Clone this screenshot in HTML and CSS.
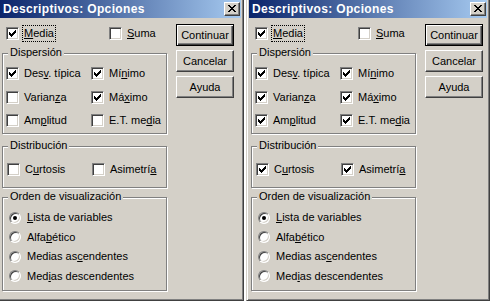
FILE: index.html
```html
<!DOCTYPE html>
<html lang="es">
<head>
    <meta charset="UTF-8">
    <title>Descriptivos: Opciones</title>
    <link rel="stylesheet" href="styles.css">
</head>
<body>
    <svg class="defs" width="0" height="0">
        <defs>
            <path id="tick" d="M6 0h1v1h-1z M5 1h2v1h-2z M0 2h1v1h-1z M4 2h3v1h-3z M0 3h2v1h-2z M3 3h3v1h-3z M0 4h5v1h-5z M1 5h3v1h-3z M2 6h1v1h-1z"/>
            <path id="cross" d="M0 0h2v1h-2z M6 0h2v1h-2z M1 1h2v1h-2z M5 1h2v1h-2z M2 2h4v1h-4z M3 3h2v1h-2z M2 4h4v1h-4z M1 5h2v1h-2z M5 5h2v1h-2z M0 6h2v1h-2z M6 6h2v1h-2z"/>
        </defs>
    </svg>

    <div class="screens">
        <!-- first state: default options -->
        <div class="window">
            <div class="titlebar">
                <span class="title">Descriptivos: Opciones</span>
                <span class="close"><svg width="8" height="7"><use href="#cross"/></svg></span>
            </div>
            <div class="client">
                <div class="options">
                    <div class="toprow">
                        <label class="check focus"><span class="cb"><svg width="7" height="7"><use href="#tick"/></svg></span><span class="text"><u>M</u>edia</span></label>
                        <label class="check"><span class="cb"></span><span class="text"><u>S</u>uma</span></label>
                    </div>
                    <div class="group disp">
                        <span class="legend">Dispersión</span>
                        <div class="grid">
                            <label class="check"><span class="cb"><svg width="7" height="7"><use href="#tick"/></svg></span><span class="text">Des<u>v</u>. típica</span></label>
                            <label class="check"><span class="cb"><svg width="7" height="7"><use href="#tick"/></svg></span><span class="text">Mí<u>n</u>imo</span></label>
                            <label class="check"><span class="cb"></span><span class="text">Varian<u>z</u>a</span></label>
                            <label class="check"><span class="cb"><svg width="7" height="7"><use href="#tick"/></svg></span><span class="text">Má<u>x</u>imo</span></label>
                            <label class="check"><span class="cb"></span><span class="text">Am<u>p</u>litud</span></label>
                            <label class="check"><span class="cb"></span><span class="text">E.T. me<u>d</u>ia</span></label>
                        </div>
                    </div>
                    <div class="group dist">
                        <span class="legend">Distribución</span>
                        <div class="grid">
                            <label class="check"><span class="cb"></span><span class="text">C<u>u</u>rtosis</span></label>
                            <label class="check"><span class="cb"></span><span class="text">Asimetrí<u>a</u></span></label>
                        </div>
                    </div>
                    <div class="group orden">
                        <span class="legend">Orden de visualización</span>
                        <label class="radio"><span class="rb on"></span><span class="text"><u>L</u>ista de variables</span></label>
                        <label class="radio"><span class="rb"></span><span class="text">Alfa<u>b</u>ético</span></label>
                        <label class="radio"><span class="rb"></span><span class="text">Medias as<u>c</u>endentes</span></label>
                        <label class="radio"><span class="rb"></span><span class="text">Med<u>i</u>as descendentes</span></label>
                    </div>
                </div>
                <div class="buttons">
                    <span class="btn default">Continuar</span>
                    <span class="btn">Cancelar</span>
                    <span class="btn">Ayuda</span>
                </div>
            </div>
        </div>

        <!-- second state: everything ticked -->
        <div class="window narrow">
            <div class="titlebar">
                <span class="title">Descriptivos: Opciones</span>
                <span class="close"><svg width="8" height="7"><use href="#cross"/></svg></span>
            </div>
            <div class="client">
                <div class="options">
                    <div class="toprow">
                        <label class="check focus"><span class="cb"><svg width="7" height="7"><use href="#tick"/></svg></span><span class="text"><u>M</u>edia</span></label>
                        <label class="check"><span class="cb"></span><span class="text"><u>S</u>uma</span></label>
                    </div>
                    <div class="group disp">
                        <span class="legend">Dispersión</span>
                        <div class="grid">
                            <label class="check"><span class="cb"><svg width="7" height="7"><use href="#tick"/></svg></span><span class="text">Des<u>v</u>. típica</span></label>
                            <label class="check"><span class="cb"><svg width="7" height="7"><use href="#tick"/></svg></span><span class="text">Mí<u>n</u>imo</span></label>
                            <label class="check"><span class="cb"><svg width="7" height="7"><use href="#tick"/></svg></span><span class="text">Varian<u>z</u>a</span></label>
                            <label class="check"><span class="cb"><svg width="7" height="7"><use href="#tick"/></svg></span><span class="text">Má<u>x</u>imo</span></label>
                            <label class="check"><span class="cb"><svg width="7" height="7"><use href="#tick"/></svg></span><span class="text">Am<u>p</u>litud</span></label>
                            <label class="check"><span class="cb"><svg width="7" height="7"><use href="#tick"/></svg></span><span class="text">E.T. me<u>d</u>ia</span></label>
                        </div>
                    </div>
                    <div class="group dist">
                        <span class="legend">Distribución</span>
                        <div class="grid">
                            <label class="check"><span class="cb"><svg width="7" height="7"><use href="#tick"/></svg></span><span class="text">C<u>u</u>rtosis</span></label>
                            <label class="check"><span class="cb"><svg width="7" height="7"><use href="#tick"/></svg></span><span class="text">Asimetrí<u>a</u></span></label>
                        </div>
                    </div>
                    <div class="group orden">
                        <span class="legend">Orden de visualización</span>
                        <label class="radio"><span class="rb on"></span><span class="text"><u>L</u>ista de variables</span></label>
                        <label class="radio"><span class="rb"></span><span class="text">Alfa<u>b</u>ético</span></label>
                        <label class="radio"><span class="rb"></span><span class="text">Medias as<u>c</u>endentes</span></label>
                        <label class="radio"><span class="rb"></span><span class="text">Med<u>i</u>as descendentes</span></label>
                    </div>
                </div>
                <div class="buttons">
                    <span class="btn default">Continuar</span>
                    <span class="btn">Cancelar</span>
                    <span class="btn">Ayuda</span>
                </div>
            </div>
        </div>
    </div>
</body>
</html>
```

FILE: styles.css
```css
body {
    margin: 0;
    background: #fff;
    font-family: 'Liberation Sans', Arial, sans-serif;
    font-size: 11px;
    color: #000;
    overflow: hidden;
}
.defs {
    position: absolute;
}
.screens {
    display: flex;
    gap: 2px;
    margin: -3px 0 0 -3px;
    width: 500px;
}
.window {
    box-sizing: border-box;
    flex: none;
    width: 247px;
    height: 304px;
    padding: 2px;
    background: #d4d0c8;
    border: 1px solid;
    border-color: #d4d0c8 #404040 #404040 #d4d0c8;
    box-shadow: inset 1px 1px #fff, inset -1px -1px #808080;
    display: flex;
    flex-direction: column;
}
.window.narrow {
    width: 244px;
}
.titlebar {
    height: 18px;
    flex: none;
    display: flex;
    align-items: center;
    padding: 0 1px 0 3px;
    background: linear-gradient(to right, #0a246a, #a6caf0);
    color: #fff;
    font-size: 12px;
    font-weight: bold;
    letter-spacing: 0.35px;
}
.title {
    flex: 1;
    white-space: nowrap;
}
.close {
    box-sizing: border-box;
    width: 16px;
    height: 14px;
    padding: 2px 0 0 3px;
    background: #d4d0c8;
    border: 1px solid;
    border-color: #fff #404040 #404040 #fff;
    box-shadow: inset -1px -1px #808080;
}
.close svg,
.cb svg {
    display: block;
    shape-rendering: crispEdges;
}
.client {
    display: flex;
    align-items: flex-start;
}
.options {
    width: 165px;
    margin-left: 2px;
}
.toprow {
    display: grid;
    grid-template-columns: 103px auto;
    margin-top: 9px;
    padding-left: 4px;
}
.check,
.radio {
    display: flex;
    align-items: center;
    gap: 4px;
    height: 13px;
}
.radio {
    gap: 5px;
}
.text {
    padding: 0 1px;
    line-height: 15px;
    white-space: nowrap;
}
.focus .text {
    outline: 1px dotted #000;
}
.cb {
    box-sizing: border-box;
    flex: none;
    width: 13px;
    height: 13px;
    padding: 2px;
    background: #fff;
    border: 1px solid;
    border-color: #808080 #fff #fff #808080;
    box-shadow: inset 1px 1px #404040, inset -1px -1px #d4d0c8;
}
.rb {
    position: relative;
    box-sizing: border-box;
    flex: none;
    width: 12px;
    height: 12px;
    border-radius: 50%;
    background: #fff;
    border: 1px solid;
    border-color: #808080 #fff #fff #808080;
    box-shadow: inset 1px 1px #404040, inset -1px -1px #d4d0c8;
}
.rb.on::after {
    content: "";
    position: absolute;
    left: 3px;
    top: 3px;
    width: 4px;
    height: 4px;
    border-radius: 50%;
    background: #000;
}
.group {
    position: relative;
    box-sizing: border-box;
    border: 1px solid #808080;
    box-shadow: inset 1px 1px #fff, 1px 1px #fff;
}
.legend {
    position: absolute;
    left: 5px;
    top: -8px;
    padding: 0 2px;
    line-height: 13px;
    background: #d4d0c8;
    white-space: nowrap;
}
.grid {
    display: grid;
    grid-template-columns: 85px auto;
    grid-auto-rows: 13px;
    row-gap: 10.5px;
}
.disp {
    height: 81px;
    margin-top: 13px;
    padding: 13px 0 0 3px;
}
.dist {
    height: 42px;
    margin-top: 12px;
    padding: 16px 0 0 4px;
}
.orden {
    height: 94px;
    margin-top: 9px;
    padding: 13px 0 0 6px;
    display: flex;
    flex-direction: column;
    gap: 6.67px;
}
.buttons {
    display: flex;
    flex-direction: column;
    gap: 4px;
    margin: 6px 0 0 9px;
}
.btn {
    box-sizing: border-box;
    width: 58px;
    height: 22px;
    display: flex;
    align-items: center;
    justify-content: center;
    border: 1px solid;
    border-color: #fff #404040 #404040 #fff;
    box-shadow: inset -1px -1px #808080;
}
.btn.default {
    border-color: #000;
    box-shadow: inset 1px 1px #fff, inset -1px -1px #404040, inset -2px -2px #808080;
}
```
